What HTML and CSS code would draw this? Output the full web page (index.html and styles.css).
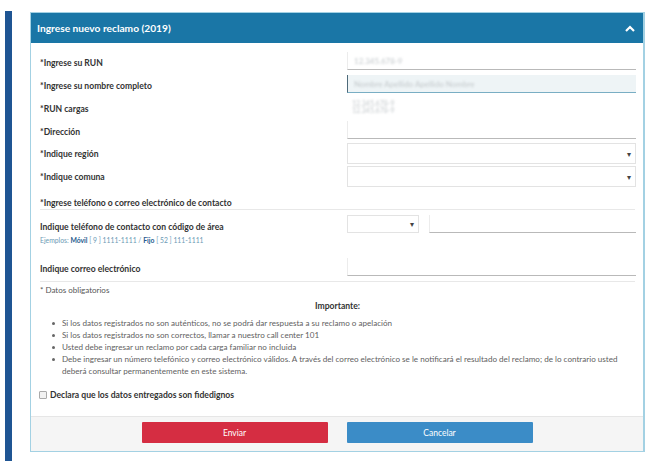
FILE: index.html
```html
<!DOCTYPE html>
<html lang="es">
<head>
<meta charset="utf-8">
<title>Ingrese nuevo reclamo</title>
<link rel="stylesheet" href="styles.css">
</head>
<body>
<div class="side-bar"></div>
<div class="panel">
  <div class="panel-head">
    <span class="panel-title">Ingrese nuevo reclamo (2019)</span>
    <svg class="chevron" width="10" height="7" viewBox="0 0 10 7"><path d="M1 6 L5 2 L9 6" fill="none" stroke="#fff" stroke-width="2.2"/></svg>
  </div>
  <div class="panel-body">
    <div class="row r-run">
      <label class="lbl">*Ingrese su RUN</label>
      <div class="field f-line f-lightleft"><span class="blur">12.345.678-9</span></div>
    </div>
    <div class="row r-std">
      <label class="lbl">*Ingrese su nombre completo</label>
      <div class="field f-focus"><span class="blur">Nombre Apellido Apellido Nombre</span></div>
    </div>
    <div class="row r-std">
      <label class="lbl">*RUN cargas</label>
      <div class="cargas"><span class="blur">12.345.678-9</span><span class="blur">12.345.678-9</span></div>
    </div>
    <div class="row r-std">
      <label class="lbl">*Dirección</label>
      <div class="field f-line f-lightleft"></div>
    </div>
    <div class="row r-sel1">
      <label class="lbl lbl-sel">*Indique región</label>
      <div class="select"><span class="arrow">▾</span></div>
    </div>
    <div class="row r-sel2">
      <label class="lbl lbl-sel">*Indique comuna</label>
      <div class="select"><span class="arrow">▾</span></div>
    </div>
    <div class="contact-head">*Ingrese teléfono o correo electrónico de contacto</div>
    <div class="row r-phone">
      <div class="phone-lbl">
        <div class="lbl-plain">Indique teléfono de contacto con código de área</div>
        <div class="example">Ejemplos: <b>Móvil</b> [ 9 ] 1111-1111 / <b>Fijo</b> [ 52 ] 111-1111</div>
      </div>
      <div class="phone-fields">
        <div class="select small-sel"><span class="arrow">▾</span></div>
        <div class="field f-line f-lightleft grow"></div>
      </div>
    </div>
    <div class="row r-email">
      <label class="lbl">Indique correo electrónico</label>
      <div class="field f-line f-lightleft"></div>
    </div>
    <div class="mandatory">* Datos obligatorios</div>
    <div class="important">Importante:</div>
    <ul class="notes">
      <li>Si los datos registrados no son auténticos, no se podrá dar respuesta a su reclamo o apelación</li>
      <li>Si los datos registrados no son correctos, llamar a nuestro call center 101</li>
      <li>Usted debe ingresar un reclamo por cada carga familiar no incluida</li>
      <li>Debe ingresar un número telefónico y correo electrónico válidos. A través del correo electrónico se le notificará el resultado del reclamo; de lo contrario usted deberá consultar permanentemente en este sistema.</li>
    </ul>
    <label class="declare"><span class="checkbox"></span>Declara que los datos entregados son fidedignos</label>
  </div>
  <div class="panel-foot">
    <button class="btn btn-send">Enviar</button>
    <button class="btn btn-cancel">Cancelar</button>
  </div>
</div>
</body>
</html>
```
FILE: styles.css
```css
* { box-sizing: border-box; }
html, body { margin: 0; padding: 0; background: #fff; }
body {
  display: flex;
  align-items: flex-start;
  padding: 11px 0 0 5px;
  height: 461px;
  overflow: hidden;
  font-family: Lato, "Open Sans", sans-serif;
  color: #333;
}
.side-bar {
  width: 7px;
  height: 460px;
  background: #1f5593;
  flex: none;
}
.panel {
  margin-left: 18px;
  margin-top: 1px;
  width: 615px;
  border: 1px solid #a3d1e3;
  border-right-width: 2px;
  background: #fff;
  display: flex;
  flex-direction: column;
}
.panel-head {
  height: 30px;
  background: #1a76a6;
  display: flex;
  align-items: center;
  justify-content: space-between;
  padding: 0 8px 0 6px;
}
.panel-title {
  color: #fff;
  font-weight: 700;
  font-size: 10.2px;
}
.chevron { margin-top: 1px; }
.panel-body {
  padding: 9px 8px 0 9px;
}
.row {
  display: grid;
  grid-template-columns: 307px 289px;
  align-items: start;
}
.lbl {
  font-size: 8.6px;
  font-weight: 700;
  color: #333;
  height: 18px;
  line-height: 14px;
  padding-top: 4px;
  white-space: nowrap;
}
.lbl-sel { height: 21px; line-height: 19px; padding-top: 2px; }
.r-std { margin-top: 5px; }
.r-sel1 { margin-top: 4px; }
.r-sel2 { margin-top: 2px; }
.field {
  height: 18px;
  overflow: hidden;
  padding: 0 6px;
  display: flex;
  align-items: center;
}
.f-line { border-bottom: 1px solid #b9b9b9; }
.f-lightleft { border-left: 1px solid #ececec; }
.f-focus {
  background: #eef4f6;
  border-left: 1px solid #4e6a7a;
  border-bottom: 1px solid #79aec4;
}
.blur {
  font-size: 8px;
  color: #c4c9cc;
  filter: blur(1.3px);
  white-space: nowrap;
}
.cargas {
  height: 18px;
  display: flex;
  flex-direction: column;
  justify-content: center;
  padding-left: 5px;
  line-height: 7px;
}
.cargas .blur { font-size: 7px; }
.select {
  height: 21px;
  border: 1px solid #e3e3e3;
  display: flex;
  align-items: center;
  justify-content: flex-end;
  padding-right: 4px;
}
.arrow {
  font-size: 8px;
  color: #444;
  line-height: 1;
}
.contact-head {
  margin-top: 11px;
  font-size: 8.6px;
  font-weight: 700;
  line-height: 10px;
  height: 12px;
  padding-bottom: 1px;
  border-bottom: 1px solid #e8e8e8;
  white-space: nowrap;
}
.r-phone { margin-top: 5px; }
.phone-lbl { padding-top: 7px; }
.lbl-plain {
  font-size: 8.6px;
  font-weight: 700;
  line-height: 10px;
  white-space: nowrap;
}
.example {
  margin-top: 3px;
  font-size: 6.8px;
  line-height: 10px;
  color: #6c9ab5;
  white-space: nowrap;
}
.example b { color: #1e5a8d; font-weight: 700; }
.phone-fields {
  display: flex;
  gap: 10px;
}
.small-sel { width: 72px; height: 18px; flex: none; }
.grow { flex: 1; }
.r-email { margin-top: 13px; border-bottom: 1px solid #e8e8e8; padding-bottom: 5px; }
.mandatory {
  margin-top: 3px;
  font-size: 8px;
  line-height: 10px;
  color: #555;
}
.important {
  margin-top: 6px;
  text-align: center;
  font-size: 8.6px;
  font-weight: 700;
  line-height: 10px;
}
.notes {
  margin: 6px 0 0;
  padding: 0 0 0 22px;
  font-size: 8.1px;
  line-height: 12px;
  color: #5f5f5f;
  list-style: none;
}
.notes li { position: relative; }
.notes li::before {
  content: "";
  position: absolute;
  left: -10px;
  top: 5px;
  width: 3px;
  height: 3px;
  border-radius: 50%;
  background: #666;
}
.declare {
  display: flex;
  align-items: center;
  margin-top: 13px;
  margin-left: -1px;
  font-size: 8.6px;
  font-weight: 700;
  line-height: 10px;
  height: 26px;
  align-items: flex-start;
  color: #333;
}
.checkbox {
  width: 8px;
  height: 8px;
  margin-top: 1px;
  border: 1px solid #aaa;
  border-radius: 1px;
  background: #f2f2f2;
  margin-right: 3px;
}
.panel-foot {
  height: 35px;
  background: #f5f5f5;
  border-top: 1px solid #e6e6e6;
  display: flex;
  justify-content: center;
  align-items: flex-start;
  gap: 19px;
  padding-top: 5px;
}
.btn {
  width: 186px;
  height: 21px;
  border: none;
  border-radius: 1px;
  font-family: Lato, "Open Sans", sans-serif;
  font-size: 8.5px;
  color: #fff;
}
.btn-send { background: #d52d42; }
.btn-cancel { background: #3b8cc7; }
```
